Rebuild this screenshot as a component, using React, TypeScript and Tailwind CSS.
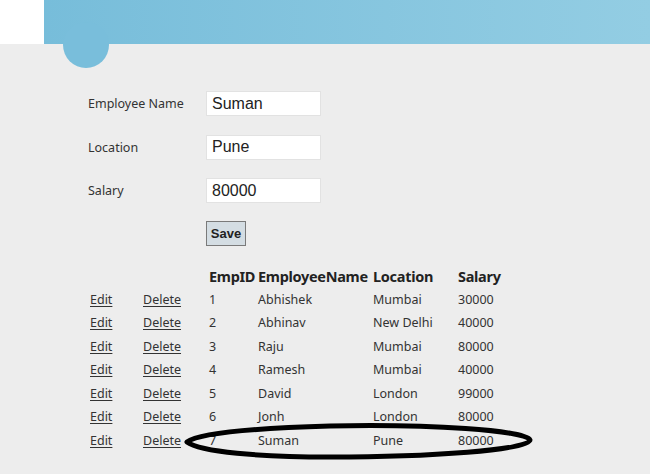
import React from "react";

const rows = [
  ["1", "Abhishek", "Mumbai", "30000"],
  ["2", "Abhinav", "New Delhi", "40000"],
  ["3", "Raju", "Mumbai", "80000"],
  ["4", "Ramesh", "Mumbai", "40000"],
  ["5", "David", "London", "99000"],
  ["6", "Jonh", "London", "80000"],
  ["7", "Suman", "Pune", "80000"],
];

const fields = [
  ["Employee Name", "Suman"],
  ["Location", "Pune"],
  ["Salary", "80000"],
];

export default function App() {
  return (
    <div
      className="relative w-[650px] h-[474px] overflow-hidden bg-[#ededed] text-[#333]"
      style={{ fontFamily: '"Noto Sans", "Open Sans", sans-serif' }}
    >
      {/* header */}
      <div className="relative h-[44px] flex">
        <div className="w-[44px] h-full bg-white" />
        <div className="flex-1 h-full bg-gradient-to-r from-[#77bdda] to-[#93cde3]" />
        <div className="absolute left-[63px] top-[22px] w-[46px] h-[46px] rounded-full bg-[#79bedb]" />
      </div>

      {/* form */}
      <div className="pl-[88px] pt-[47px] flex flex-col gap-[18.5px]">
        {fields.map(([label, value]) => (
          <div key={label} className="flex items-center h-[25px]">
            <div className="w-[118px] text-[12.5px] pt-[2px]">{label}</div>
            <div
              className="w-[115px] h-[25px] bg-white border border-[#e2e2e2] flex items-center pl-[5px] text-[16px] text-[#222]"
              style={{ fontFamily: '"Liberation Sans", Arial, sans-serif' }}
            >
              {value}
            </div>
          </div>
        ))}
        <div className="flex h-[25px] items-start">
          <div className="w-[118px]" />
          <button
            className="w-[40px] h-[25px] mt-[-0.5px] bg-[#d4dde3] border border-[#7a7a7a] text-[13px] font-bold text-[#222] flex items-center justify-center"
            style={{ fontFamily: '"Liberation Sans", Arial, sans-serif' }}
          >
            Save
          </button>
        </div>
      </div>

      {/* table */}
      <div className="pl-[88px] pt-[19px]">
        <div className="grid grid-cols-[55px_66px_49px_115px_85px_60px] h-[23px] items-center text-[14.5px] font-bold tracking-[-0.3px] text-[#222]">
          <div />
          <div />
          <div>EmpID</div>
          <div>EmployeeName</div>
          <div>Location</div>
          <div>Salary</div>
        </div>
        {rows.map((r) => (
          <div
            key={r[0]}
            className="grid grid-cols-[55px_66px_49px_115px_85px_60px] h-[23.5px] items-center text-[12.5px]"
          >
            <div className="pl-[2px] underline underline-offset-2">Edit</div>
            <div className="underline underline-offset-2">Delete</div>
            <div>{r[0]}</div>
            <div>{r[1]}</div>
            <div>{r[2]}</div>
            <div>{r[3]}</div>
          </div>
        ))}
      </div>

      {/* hand-drawn ellipse annotation */}
      <svg
        className="absolute left-0 top-0 pointer-events-none"
        width="650"
        height="474"
        viewBox="0 0 650 474"
      >
        <path
          d="M 187 442 C 200 432, 260 428, 330 426 C 430 424, 525 430, 530 440 C 530 450, 430 457, 330 457 C 260 457, 200 452, 187 442 Z"
          fill="none"
          stroke="#000"
          strokeWidth="5"
          strokeLinejoin="round"
        />
      </svg>
    </div>
  );
}
